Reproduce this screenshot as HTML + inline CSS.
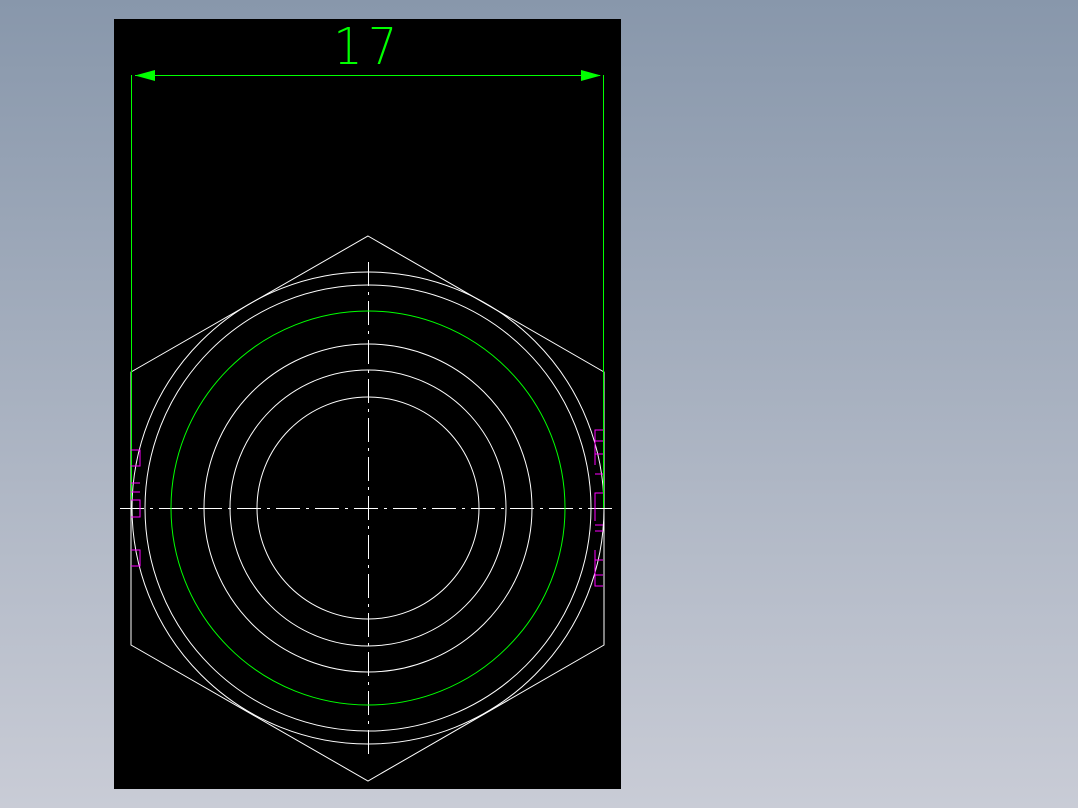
<!DOCTYPE html>
<html><head><style>
html,body{margin:0;padding:0;width:1078px;height:808px;overflow:hidden;background:linear-gradient(#8897ab,#c9ccd6);}
svg{position:absolute;left:0;top:0}
</style></head><body>
<svg width="1078" height="808" viewBox="0 0 1078 808">
<rect x="114" y="19" width="507" height="770" fill="#000"/>
<g fill="none" stroke="#fff" stroke-width="1">
<polygon points="368,236 604,372 604,645 368,781 131,645 131,372"/>
<circle cx="368" cy="508" r="236"/>
<circle cx="368" cy="508" r="223"/>
<circle cx="368" cy="508" r="164"/>
<circle cx="368" cy="508" r="138"/>
<circle cx="368" cy="508" r="111"/>
<line x1="120" y1="508.5" x2="616" y2="508.5" stroke-dasharray="24,6,3,6"/>
<line x1="368.5" y1="262" x2="368.5" y2="757" stroke-dasharray="24,6,3,6"/>
</g>
<circle cx="368" cy="508" r="197" fill="none" stroke="#00ff00"/>
<g stroke="#00ff00" stroke-width="1" fill="none">
<line x1="131.5" y1="75" x2="131.5" y2="500"/>
<line x1="603.5" y1="75" x2="603.5" y2="508"/>
<line x1="135" y1="75.5" x2="600" y2="75.5"/>
</g>
<g fill="#00ff00">
<polygon points="135,75.5 155,70 155,81"/>
<polygon points="601,75.5 581,70 581,81"/>
</g>
<text x="368" y="64" fill="#00ff00" font-family="DejaVu Sans ExtraLight, DejaVu Sans, sans-serif" font-size="51" font-weight="200" text-anchor="middle" letter-spacing="6" transform="translate(368 0) scale(0.9 1) translate(-368 0)">17</text>
<g stroke="#ff00ff" stroke-width="1" fill="none">
<polyline points="131,450 140,450 140,466 131,466"/>
<line x1="131" y1="483" x2="140" y2="483"/>
<polyline points="131,500 140,500 140,517 131,517"/>
<line x1="131" y1="492" x2="140" y2="492"/>
<polyline points="131,550 140,550 140,566 131,566"/>
<polyline points="603,430 595,430 595,465"/>
<line x1="595" y1="441" x2="603" y2="441"/>
<line x1="595" y1="454" x2="603" y2="454"/>
<line x1="595" y1="474" x2="603" y2="474"/>
<polyline points="603,493 595,493 595,521"/>
<line x1="595" y1="525" x2="603" y2="525"/>
<line x1="595" y1="531" x2="603" y2="531"/>
<polyline points="595,550 595,586 603,586"/>
<line x1="595" y1="560" x2="603" y2="560"/>
<line x1="595" y1="575" x2="603" y2="575"/>
</g>
</svg>
</body></html>
